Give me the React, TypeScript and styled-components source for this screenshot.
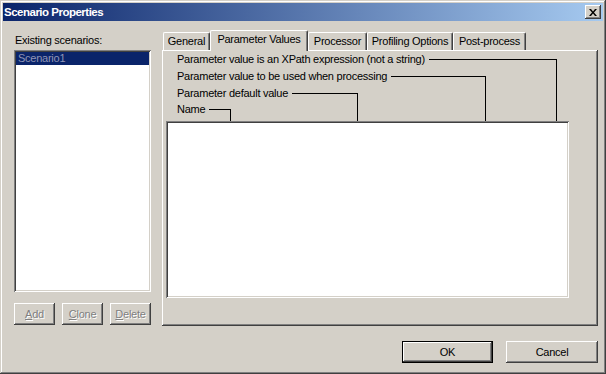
import React from "react";
import styled, { createGlobalStyle } from "styled-components";

const GlobalStyle = createGlobalStyle`
	html, body {
		margin: 0;
		padding: 0;
		background: #d4d0c8;
	}
	body {
		font-family: "Liberation Sans", Arial, sans-serif;
		font-size: 11px;
		letter-spacing: -0.25px;
		color: #000;
	}
`

const raised = `
	box-shadow: inset -1px -1px #404040, inset 1px 1px #fff, inset -2px -2px #808080, inset 2px 2px #d4d0c8;
`
const sunken = `
	box-shadow: inset 1px 1px #808080, inset -1px -1px #fff, inset 2px 2px #404040, inset -2px -2px #d4d0c8;
`

const Window = styled.div`
	width: 606px;
	height: 374px;
	box-sizing: border-box;
	padding: 3px;
	background: #d4d0c8;
	box-shadow: inset -1px -1px #404040, inset 1px 1px #d4d0c8, inset -2px -2px #808080, inset 2px 2px #fff;
	display: flex;
	flex-direction: column;
`

const TitleBar = styled.div`
	height: 18px;
	display: flex;
	align-items: center;
	padding: 0 2px 0 1px;
	background: linear-gradient(to right, #0a246a, #a6caf0);
`

const Title = styled.div`
	flex: 1;
	color: #fff;
	font-weight: bold;
	font-size: 11.5px;
	line-height: 18px;
	letter-spacing: -0.5px;
`

const CloseBtn = styled.div`
	width: 16px;
	height: 14px;
	background: #d4d0c8;
	${raised}
	display: flex;
	align-items: center;
	justify-content: center;
`

const Body = styled.div`
	flex: 1;
	display: flex;
	flex-direction: column;
	padding: 9px 5px 0 11px;
`

const Main = styled.div`
	display: flex;
	gap: 11px;
	height: 296px;
`

const LeftCol = styled.div`
	width: 137px;
	display: flex;
	flex-direction: column;
`

const Label = styled.div`
	margin-top: 4px;
	padding-left: 1px;
	line-height: 13px;
`

const ListBox = styled.div`
	margin-top: 3px;
	height: 242px;
	box-sizing: border-box;
	padding: 2px;
	background: #fff;
	${sunken}
`

const ListItem = styled.div<{ $selected?: boolean }>`
	height: 13px;
	line-height: 13px;
	padding-left: 2px;
	background: ${p => p.$selected ? "#0a246a" : "transparent"};
	color: ${p => p.$selected ? "#9094b6" : "#000"};
`

const ButtonRow = styled.div`
	margin-top: 11px;
	display: flex;
	gap: 7px;
`

const Button = styled.div<{ $w: number, $disabled?: boolean, $default?: boolean }>`
	width: ${p => p.$w}px;
	height: 22px;
	box-sizing: border-box;
	display: flex;
	align-items: center;
	justify-content: center;
	background: #d4d0c8;
	color: ${p => p.$disabled ? "#808080" : "#000"};
	text-shadow: ${p => p.$disabled ? "1px 1px #fff" : "none"};
	border: ${p => p.$default ? "1px solid #000" : "none"};
	${raised}
	u {
		text-decoration-thickness: 1px;
		text-underline-offset: 1px;
	}
`

const RightCol = styled.div`
	width: 436px;
	display: flex;
	flex-direction: column;
`

const TabStrip = styled.div`
	height: 20px;
	display: flex;
	align-items: flex-end;
	padding-left: 1px;
`

const Tab = styled.div<{ $w: number, $active?: boolean }>`
	width: ${p => p.$w}px;
	height: ${p => p.$active ? 21 : 18}px;
	margin-bottom: ${p => p.$active ? -1 : 0}px;
	position: relative;
	z-index: ${p => p.$active ? 2 : 0};
	box-sizing: border-box;
	background: #d4d0c8;
	border-top: 1px solid #fff;
	border-left: 1px solid #fff;
	border-right: 1px solid #404040;
	border-radius: 2px 2px 0 0;
	box-shadow: inset -1px 0 #808080;
	padding-top: 2px;
	line-height: 13px;
	text-align: center;
	white-space: nowrap;
`

const Panel = styled.div`
	position: relative;
	z-index: 1;
	height: 276px;
	box-sizing: border-box;
	padding-left: 4px;
	background: #d4d0c8;
	box-shadow: inset -1px -1px #404040, inset 1px 1px #fff, inset -2px -2px #808080;
`

const ColumnHeader = styled.div`
	height: 71px;
	box-sizing: border-box;
	padding-top: 3px;
`

const HeaderRow = styled.div<{ $w: number, $h: number }>`
	width: ${p => p.$w}px;
	height: ${p => p.$h}px;
	margin-left: 11px;
	display: flex;
	align-items: flex-start;
`

const HeaderText = styled.span`
	line-height: 13px;
	white-space: nowrap;
`

const Leader = styled.span<{ $drop: number }>`
	flex: 1;
	align-self: flex-start;
	margin: 6px 0 0 4px;
	height: ${p => p.$drop}px;
	box-sizing: border-box;
	border-top: 1px solid #000;
	border-right: 1px solid #000;
`

const ParamTable = styled.div`
	width: 403px;
	height: 177px;
	background: #fff;
	${sunken}
`

const Footer = styled.div`
	margin-top: 15px;
	display: flex;
	justify-content: flex-end;
	gap: 13px;
`

const tabs = [
	{ label: "General", w: 47 },
	{ label: "Parameter Values", w: 98, active: true },
	{ label: "Processor", w: 59 },
	{ label: "Profiling Options", w: 86 },
	{ label: "Post-process", w: 73 },
]

// leader lines: first row top at 53, leader 6px below, all drop to table top at y=121
const columns = [
	{ label: "Parameter value is an XPath expression (not a string)", w: 380, h: 17, drop: 62 },
	{ label: "Parameter value to be used when processing", w: 309, h: 17, drop: 45 },
	{ label: "Parameter default value", w: 181, h: 16, drop: 28 },
	{ label: "Name", w: 54, h: 15, drop: 12 },
]

const App = () => {
	return (
		<>
			<GlobalStyle />
			<Window>
				<TitleBar>
					<Title>Scenario Properties</Title>
					<CloseBtn>
						<svg width="8" height="7" viewBox="0 0 8 7">
							<path d="M0 0h2l2 2.5L6 0h2L5 3.5 8 7H6L4 4.5 2 7H0l3-3.5z" fill="#000" />
						</svg>
					</CloseBtn>
				</TitleBar>
				<Body>
					<Main>
						<LeftCol>
							<Label>Existing scenarios:</Label>
							<ListBox>
								<ListItem $selected>Scenario1</ListItem>
							</ListBox>
							<ButtonRow>
								<Button $w={41} $disabled><u>A</u>dd</Button>
								<Button $w={41} $disabled><u>C</u>lone</Button>
								<Button $w={41} $disabled><u>D</u>elete</Button>
							</ButtonRow>
						</LeftCol>
						<RightCol>
							<TabStrip>
								{tabs.map(t => (
									<Tab key={t.label} $w={t.w} $active={t.active}>{t.label}</Tab>
								))}
							</TabStrip>
							<Panel>
								<ColumnHeader>
									{columns.map(c => (
										<HeaderRow key={c.label} $w={c.w} $h={c.h}>
											<HeaderText>{c.label}</HeaderText>
											<Leader $drop={c.drop} />
										</HeaderRow>
									))}
								</ColumnHeader>
								<ParamTable />
							</Panel>
						</RightCol>
					</Main>
					<Footer>
						<Button $w={91} $default>OK</Button>
						<Button $w={92}>Cancel</Button>
					</Footer>
				</Body>
			</Window>
		</>
	)
}

export default App;
